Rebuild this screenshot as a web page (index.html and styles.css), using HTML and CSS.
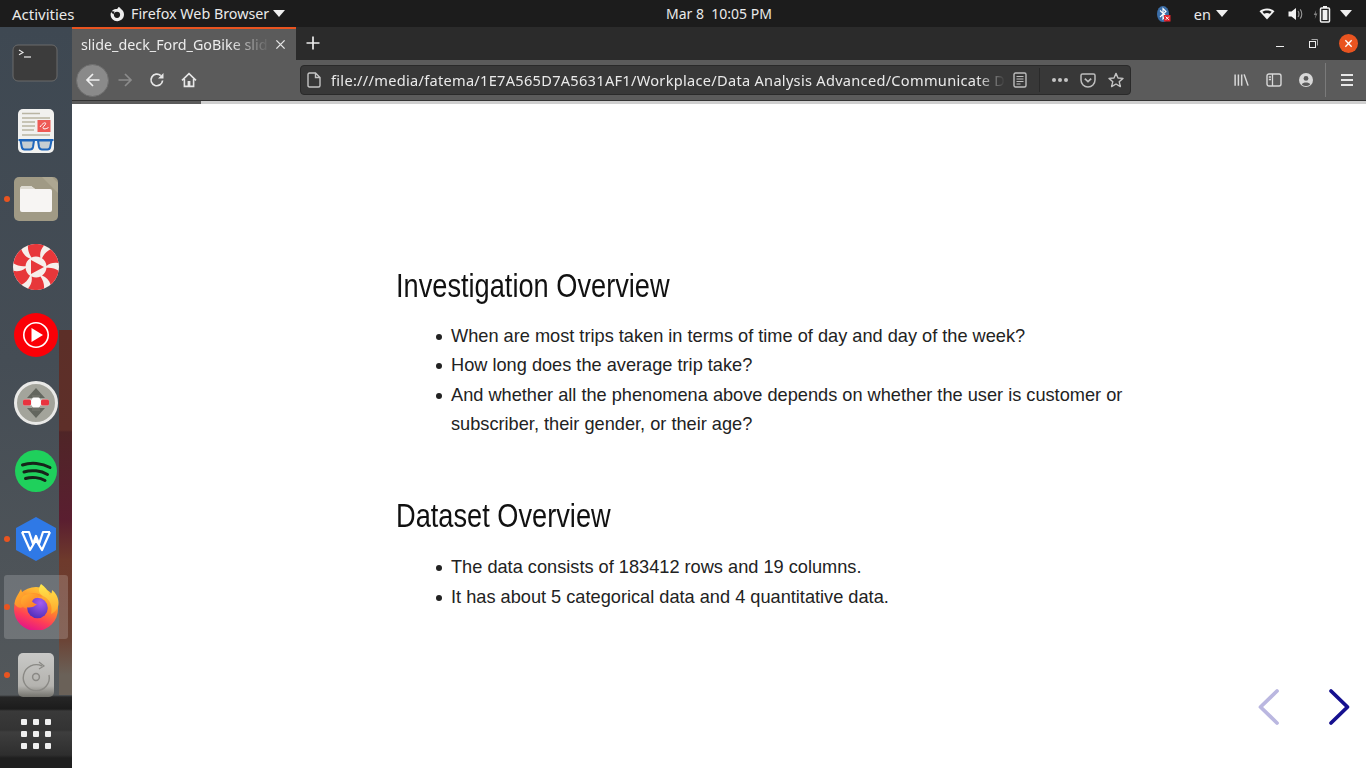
FILE: index.html
```html
<!DOCTYPE html>
<html lang="en">
<head>
<meta charset="utf-8">
<title>slide_deck_Ford_GoBike</title>
<link rel="stylesheet" href="styles.css">
</head>
<body>
<header class="topbar">
  <div class="tb-left">
    <span class="activities">Activities</span>
    <span class="appmenu">
      <svg class="fx-mono" viewBox="0 0 16 16"><path fill="#eee" d="M9.5 1 C9 2 8.6 2.6 8 3 C4.6 3 1.6 5 1.6 8.8 C1.6 12.4 4.6 15.2 8.2 15.2 C12 15.2 15 12.4 15 8.6 C15 6.2 13.8 4.2 12 3.1 C11.6 2.2 10.6 1.4 9.5 1 Z"/><circle cx="8" cy="8.8" r="3.1" fill="#1c1c1c"/><path fill="#1c1c1c" d="M1 5 L5.5 5.4 L4.5 8.4 Z"/></svg>
      <span>Firefox Web Browser</span><i class="caret"></i>
    </span>
  </div>
  <div class="clock">Mar 8&nbsp;&nbsp;10:05 PM</div>
  <div class="tb-right">
    <svg class="bt" viewBox="0 0 14 18"><ellipse cx="6" cy="9" rx="6" ry="8" fill="#3b6ea8"/><path d="M3 5.5 L9 11 L6 14 V3.5 L9 6.5 L3 12" fill="none" stroke="#fff" stroke-width="1.1"/><rect x="7" y="10" width="6.5" height="6.5" fill="#e0242c"/><path d="M8.7 11.7 L11.8 14.8 M11.8 11.7 L8.7 14.8" stroke="#fff" stroke-width="1"/></svg>
    <span class="lang">en</span><i class="caret lang-caret"></i>
    <svg class="wifi" viewBox="0 0 16 12"><path d="M0.5 3.2 C4.5 -0.3 11.5 -0.3 15.5 3.2 L8 11.5 Z" fill="#f2f2f2"/><path d="M3.4 3.8 C6 2 10 2 12.6 3.8 L10.9 5.8 C9 4.6 7 4.6 5.1 5.8 Z" fill="#1c1c1c"/></svg>
    <svg class="vol" viewBox="0 0 16 14"><path d="M0.5 4.5 H3.5 L8 1 V13 L3.5 9.5 H0.5 Z" fill="#f2f2f2"/><path d="M10 4 C11.3 5.5 11.3 8.5 10 10 M12.2 2.4 C14.3 5 14.3 9 12.2 11.6" fill="none" stroke="#999" stroke-width="1.1"/></svg>
    <svg class="batt" viewBox="0 0 18 18"><path d="M3.2 5 L0.8 10 H2.6 L1.8 14 L4.4 8.4 H2.6 Z" fill="#888"/><rect x="7.5" y="3" width="9" height="14" rx="1" fill="none" stroke="#f2f2f2" stroke-width="1.5"/><rect x="10" y="1" width="4" height="2" fill="#f2f2f2"/><rect x="9.6" y="5" width="4.8" height="10" fill="#f2f2f2"/></svg>
    <i class="caret"></i>
  </div>
</header>

<div class="desktop">
  <nav class="dock">
    <div class="dock-item">
      <svg class="ic" viewBox="0 0 48 40"><rect x="1" y="1" width="44" height="36" rx="5" fill="#3c3c3c" stroke="#6a6a6a" stroke-width="1"/><path d="M7 6 L11 8.4 L7 10.8" fill="none" stroke="#eee" stroke-width="1.1"/><path d="M12 13 H19" stroke="#eee" stroke-width="1.2"/></svg>
    </div>
    <div class="dock-item">
      <svg class="ic" viewBox="0 0 38 46"><rect x="1" y="1" width="36" height="44" rx="5" fill="#f1f1ef"/><path d="M5 5.5 H23 M5 10 H33 M5 14 H18 M5 18 H18 M5 22 H17 M5 27 H33" stroke="#b9b5a3" stroke-width="1.7"/><rect x="20.5" y="12" width="13" height="12" fill="#ee5a55"/><path d="M23 19 C27 13 31 14 27 18 C24 21 28 22 31.5 19.5" fill="none" stroke="#fff" stroke-width="1"/><path d="M1.5 32 H36.5" stroke="#1f66bb" stroke-width="2"/><path d="M3.5 32.5 H17 L16 39 Q15.5 41.5 13 41.5 H7.5 Q5.3 41.5 4.8 39 Z M21 32.5 H34.5 L33.2 39 Q32.7 41.5 30.5 41.5 H25 Q22.8 41.5 22 39 Z" fill="#c6ced2" stroke="#1f66bb" stroke-width="2" stroke-linejoin="round"/></svg>
    </div>
    <div class="dock-item">
      <span class="dot"></span>
      <svg class="ic" viewBox="0 0 44 44"><rect x="0" y="0" width="44" height="44" rx="5" fill="#a09a85"/><path d="M28 0 L44 16 V6 L38 0 Z" fill="#ada792"/><path d="M6 13 Q6 9 9 9 H17 L21 12 H36 Q38 12 38 14 V33 Q38 35 36 35 H8 Q6 35 6 33 Z" fill="#f7f5f3"/><path d="M6 13 Q6 9 9 9 H17 L21 12 H6 Z" fill="#dedbd2"/></svg>
    </div>
    <div class="dock-item">
      <svg class="ic" viewBox="0 0 46 46"><defs><path id="blade" d="M15 1.5 A23 23 0 0 1 31 1.4 C28 5 26.5 9 27.4 13.5 A10.5 10.5 0 0 0 18.5 13.5 C16 10 14.5 5.5 15 1.5 Z" fill="#e7373a"/></defs><circle cx="23" cy="23" r="23" fill="#f6efeb"/><use href="#blade"/><use href="#blade" transform="rotate(60 23 23)"/><use href="#blade" transform="rotate(120 23 23)"/><use href="#blade" transform="rotate(180 23 23)"/><use href="#blade" transform="rotate(240 23 23)"/><use href="#blade" transform="rotate(300 23 23)"/><path d="M18 16 L31 23 L18 30 Z" fill="#e7373a"/></svg>
    </div>
    <div class="dock-item">
      <svg class="ic" viewBox="0 0 44 44"><circle cx="22" cy="22" r="22" fill="#fb0007"/><circle cx="22" cy="22" r="12.2" fill="none" stroke="#fff" stroke-width="1.6"/><path d="M17.5 15 L29 22 L17.5 29 Z" fill="#fff"/></svg>
    </div>
    <div class="dock-item">
      <svg class="ic" viewBox="0 0 44 44"><circle cx="22" cy="22" r="20.5" fill="#a3a49b" stroke="#e9e9e7" stroke-width="3"/><path d="M22 7 L31 17 H13 Z M22 37 L13 27 H31 Z" fill="#63665e"/><rect x="18" y="14" width="8" height="16" fill="#6e7068"/><rect x="9" y="18.5" width="26" height="6" rx="1.5" fill="#f4f4f4"/><rect x="9" y="18.5" width="8" height="6" rx="1.5" fill="#e8343f"/><rect x="27" y="18.5" width="8" height="6" rx="1.5" fill="#e8343f"/><rect x="18" y="16.5" width="8" height="10" rx="1.5" fill="#fff"/></svg>
    </div>
    <div class="dock-item">
      <svg class="ic spot" viewBox="0 0 42 42"><circle cx="21" cy="21" r="21" fill="#1fd05c"/><path d="M7.5 15 C16 12 27 13 35 17.5 M9 22 C16.5 19.5 26 20.5 32.5 24.5 M10.5 28.5 C17 26.5 25 27.5 30 30.5" fill="none" stroke="#16241a" stroke-width="3" stroke-linecap="round"/></svg>
    </div>
    <div class="dock-item">
      <span class="dot"></span>
      <svg class="ic wps" viewBox="0 0 40 44"><path d="M20 0 L40 11 V33 L20 44 L0 33 V11 Z" fill="#2f79e6"/><path d="M6 15 H13 L17 27 L20 19 L23 27 L27 15 H34 M6 15 L14 33 L20 23 L26 33 L34 15" fill="none" stroke="#fff" stroke-width="2.2" stroke-linejoin="round"/></svg>
    </div>
    <div class="dock-item active">
      <span class="dot"></span>
      <svg class="ic" viewBox="0 0 46 46"><defs><linearGradient id="fxa" x1="0.75" y1="0" x2="0.35" y2="1"><stop offset="0" stop-color="#ffd23a"/><stop offset=".42" stop-color="#ff8a2a"/><stop offset=".72" stop-color="#ff3f56"/><stop offset="1" stop-color="#e2148a"/></linearGradient><linearGradient id="fxy" x1="0.5" y1="0" x2="0.5" y2="1"><stop offset="0" stop-color="#ffe94d"/><stop offset="1" stop-color="#ffa52c"/></linearGradient><linearGradient id="fxo" x1="0" y1="0" x2="1" y2="1"><stop offset="0" stop-color="#ffb62e"/><stop offset="1" stop-color="#ff6f2a"/></linearGradient><radialGradient id="fxb" cx=".65" cy=".25" r=".85"><stop offset="0" stop-color="#a45cf0"/><stop offset="1" stop-color="#4a2bb5"/></radialGradient></defs><circle cx="23" cy="25" r="22" fill="url(#fxa)"/><path fill="url(#fxy)" d="M28 0 C25 5 25 9 30 12 C37 15 40 22 38 30 C42 28 45.5 25 45.5 19 C45.5 13 42 8 39 6 C39 9 38 10.5 36.5 11 C35 6 32 3 28 0 Z"/><path fill="url(#fxo)" d="M1.5 20 C2 14 5 11 8 5 C9 9 11 11 13 11.5 C18 8 24 8 29.5 12 C24 11 19 13 18 17 C20 19.5 22 20 24 20 C20 25 14 26 10 23 C7 25 4 23 1.5 20 Z"/><circle cx="24.5" cy="24" r="10.3" fill="url(#fxb)"/><path fill="url(#fxo)" d="M8 20 C7 12 13 10 18 10 C22 9.5 27 10.5 30 13 C25 12 20.5 13.5 19 17.5 C21 19.5 22.5 20 24 20 C20 24.5 12 25 8 20 Z"/></svg>
    </div>
    <div class="dock-item">
      <span class="dot"></span>
      <svg class="ic" viewBox="0 0 36 44"><defs><linearGradient id="cd" x1="0" y1="0" x2="0" y2="1"><stop offset="0" stop-color="#c9c9c7"/><stop offset=".75" stop-color="#b4b3af"/><stop offset="1" stop-color="#73726c"/></linearGradient></defs><rect width="36" height="44" rx="5" fill="url(#cd)"/><path d="M24 13 A13 13 0 1 0 31 22" fill="none" stroke="#8a8985" stroke-width="1.4"/><path d="M21 9 L26 13 L21 16" fill="none" stroke="#8a8985" stroke-width="1.2"/><circle cx="18" cy="24" r="3.4" fill="none" stroke="#8a8985" stroke-width="1.5"/></svg>
    </div>
    <div class="dock-item">
      <div class="grid9"><i></i><i></i><i></i><i></i><i></i><i></i><i></i><i></i><i></i></div>
    </div>
  </nav>

  <section class="browser">
    <div class="tabbar">
      <div class="tab">
        <span class="tab-title">slide_deck_Ford_GoBike slid</span>
        <svg class="tab-x" viewBox="0 0 12 12"><path d="M1.5 1.5 L10.5 10.5 M10.5 1.5 L1.5 10.5" stroke="#e4e4e4" stroke-width="1.5"/></svg>
      </div>
      <svg class="newtab" viewBox="0 0 14 14"><path d="M7 0.5 V13.5 M0.5 7 H13.5" stroke="#ececec" stroke-width="1.7"/></svg>
      <div class="winctl">
        <span class="min"></span>
        <svg class="max" viewBox="0 0 9 9"><rect x="0.5" y="2.5" width="6" height="6" fill="none" stroke="#eee"/><path d="M2.5 0.5 H8.5 V6.5" fill="none" stroke="#aaa"/></svg>
        <span class="close"><svg viewBox="0 0 10 10"><path d="M1.5 1.5 L8.5 8.5 M8.5 1.5 L1.5 8.5" stroke="#fff" stroke-width="1.5"/></svg></span>
      </div>
    </div>
    <div class="navbar">
      <span class="back"><svg viewBox="0 0 16 16"><path d="M14.5 8 H2 M8 2 L2 8 L8 14" fill="none" stroke="#f0f0f0" stroke-width="1.7"/></svg></span>
      <svg class="nav-ic dim" viewBox="0 0 16 16"><path d="M1.5 8 H14 M8 2 L14 8 L8 14" fill="none" stroke="#8c8c8c" stroke-width="1.7"/></svg>
      <svg class="nav-ic" viewBox="0 0 16 16"><path d="M13.6 8.5 A5.8 5.8 0 1 1 11.8 3.7" fill="none" stroke="#e6e6e6" stroke-width="1.7"/><path d="M14.5 1 V6.5 H9 Z" fill="#e6e6e6"/></svg>
      <svg class="nav-ic" viewBox="0 0 16 16"><path d="M1 8.4 L8 1.6 L15 8.4 M3.4 7 V14.4 H12.6 V7" fill="none" stroke="#e6e6e6" stroke-width="1.6"/><rect x="6.6" y="9" width="2.8" height="5.4" fill="#e6e6e6"/></svg>
      <div class="urlbar">
        <svg class="page" viewBox="0 0 14 16"><path d="M1 2.5 Q1 1 2.5 1 H8.5 L13 5.5 V13.5 Q13 15 11.5 15 H2.5 Q1 15 1 13.5 Z M8.5 1 V5.5 H13" fill="none" stroke="#c4c4c4" stroke-width="1.4"/></svg>
        <span class="url">file:///media/fatema/1E7A565D7A5631AF1/Workplace/Data Analysis Advanced/Communicate D</span>
        <svg class="u-ic reader" viewBox="0 0 14 16"><rect x="1" y="1" width="12" height="14" rx="1.5" fill="none" stroke="#bdbdbd" stroke-width="1.4"/><path d="M3.5 4.5 H10.5 M3.5 7 H10.5 M3.5 9.5 H10.5 M3.5 12 H7.5" stroke="#bdbdbd" stroke-width="1.2"/></svg>
        <span class="u-sep"></span>
        <span class="more"><i></i><i></i><i></i></span>
        <svg class="u-ic pocket" viewBox="0 0 16 15"><path d="M1 2.5 Q1 1 2.5 1 H13.5 Q15 1 15 2.5 V7 A7 7 0 0 1 1 7 Z" fill="none" stroke="#bdbdbd" stroke-width="1.5"/><path d="M4.8 5.6 L8 8.6 L11.2 5.6" fill="none" stroke="#bdbdbd" stroke-width="1.7"/></svg>
        <svg class="u-ic star" viewBox="0 0 16 16"><path d="M8 1.4 L10 6 L15 6.4 L11.2 9.7 L12.4 14.6 L8 12 L3.6 14.6 L4.8 9.7 L1 6.4 L6 6 Z" fill="none" stroke="#c4c4c4" stroke-width="1.4" stroke-linejoin="round"/></svg>
      </div>
      <div class="tools">
        <svg class="tool lib" viewBox="0 0 16 14"><path d="M1.2 1 V13 M4.7 1 V13 M8.2 1 V13 M10.8 1 L15 13" stroke="#d8d8d8" stroke-width="1.6" fill="none"/></svg>
        <svg class="tool side" viewBox="0 0 16 14"><rect x="1" y="1" width="14" height="12" rx="2" fill="none" stroke="#d8d8d8" stroke-width="1.4"/><path d="M6.5 1 V13 M2.8 4 H5 M2.8 6.5 H5" stroke="#d8d8d8" stroke-width="1.3"/></svg>
        <svg class="tool acct" viewBox="0 0 14 14"><circle cx="7" cy="7" r="7" fill="#d8d8d8"/><circle cx="7" cy="5.4" r="2.4" fill="#5b5b5b"/><path d="M2.8 11.4 C4 8.8 10 8.8 11.2 11.4 A7 7 0 0 1 2.8 11.4 Z" fill="#5b5b5b"/></svg>
        <span class="tool-sep"></span>
        <span class="burger"><i></i><i></i><i></i></span>
      </div>
    </div>
    <div class="progress"><div class="progress-fill"></div></div>

    <main class="slide">
      <h2>Investigation Overview</h2>
      <ul>
        <li>When are most trips taken in terms of time of day and day of the week?</li>
        <li>How long does the average trip take?</li>
        <li>And whether all the phenomena above depends on whether the user is customer or subscriber, their gender, or their age?</li>
      </ul>
      <h2 class="second">Dataset Overview</h2>
      <ul class="second-list">
        <li>The data consists of 183412 rows and 19 columns.</li>
        <li>It has about 5 categorical data and 4 quantitative data.</li>
      </ul>
      <div class="controls">
        <svg class="prev" viewBox="0 0 24 38"><path d="M20 3 L3.5 19 L20 35" fill="none" stroke="#bab7e0" stroke-width="3.8" stroke-linecap="round" stroke-linejoin="round"/></svg>
        <svg class="next" viewBox="0 0 24 38"><path d="M4 3 L20.5 19 L4 35" fill="none" stroke="#15108f" stroke-width="3.8" stroke-linecap="round" stroke-linejoin="round"/></svg>
      </div>
    </main>
  </section>
</div>
</body>
</html>
```

FILE: styles.css
```css
* { box-sizing: border-box; }
html, body { margin: 0; height: 100%; overflow: hidden; }
body { width: 1366px; height: 768px; display: flex; flex-direction: column; font-family: "Noto Sans", "Open Sans", sans-serif; background: #fff; }

.topbar { height: 27px; flex: none; background: #1c1c1c; color: #eaeaea; display: flex; align-items: center; position: relative; font-size: 14.3px; }
.tb-left { display: flex; align-items: center; padding-left: 12px; }
.activities { width: 97px; font-size: 15px; }
.appmenu { display: flex; align-items: center; gap: 6px; }
.appmenu .caret { margin-left: -2px; }
.fx-mono { width: 16px; height: 16px; }
.caret { display: block; width: 0; height: 0; border: 6px solid transparent; border-top: 7px solid #f0f0f0; border-bottom: 0; }
.clock { position: absolute; left: 0; right: 0; text-align: center; top: 4px; font-size: 14px; padding-left: 72px; }
.tb-right { margin-left: auto; display: flex; align-items: center; padding-right: 14px; }
.bt { width: 14px; height: 18px; margin-right: 23px; }
.lang { font-size: 14.5px; margin-right: 5px; }
.lang-caret { margin-right: 31px; }
.wifi { width: 16px; height: 12px; margin-right: 13px; }
.vol { width: 16px; height: 14px; margin-right: 9px; }
.batt { width: 18px; height: 18px; margin-right: 9px; }

.desktop { flex: 1; display: flex; min-height: 0; }
.dock { width: 72px; flex: none; display: flex; flex-direction: column; padding-top: 2px; background:
  linear-gradient(180deg, transparent 0, transparent 668px, #262626 670px, #1c1c1c 682px, #3a3a3a 684px, #333 703px, #3e3e3e 705px, #2e2e2e 728px, #1f1f1f 731px),
  linear-gradient(180deg, #5c2f28 0, #5e2f29 100px, #4f2527 102px, #5a1e30 190px, #6e3a2c 230px, #6b4436 310px, #6a6158 345px) 59px 303px / 13px 365px no-repeat,
  linear-gradient(180deg, #3e4852 0, #454d55 45%, #565a5c 100%); }
.dock-item { height: 68px; flex: none; display: flex; align-items: center; justify-content: center; position: relative; }
.dock-item.active::before { content: ""; position: absolute; left: 4px; top: 2px; width: 64px; height: 64px; background: rgba(255,255,255,.18); border-radius: 3px; }
.dot { position: absolute; left: 4px; top: 31px; width: 6px; height: 6px; border-radius: 50%; background: #e95420; }
.ic { position: relative; width: 44px; height: 44px; }
.dock-item:nth-child(1) .ic { width: 48px; height: 40px; margin: 2px 0 0 -1px; }
.dock-item:nth-child(2) .ic { width: 38px; height: 46px; }
.dock-item:nth-child(4) .ic { width: 46px; height: 46px; }
.dock-item:nth-child(9) .ic { width: 46px; height: 46px; }
.dock-item:nth-child(10) .ic { width: 36px; height: 44px; }
.spot { width: 42px; height: 42px; }
.wps { width: 40px; height: 44px; }
.grid9 { display: grid; grid-template-columns: repeat(3, 6px); gap: 6px; margin-bottom: 18px; }
.grid9 i { display: block; width: 6px; height: 6px; background: #efefef; border-radius: 1px; }

.browser { flex: 1; min-width: 0; display: flex; flex-direction: column; }
.tabbar { height: 33px; flex: none; background: #2b2b2b; display: flex; align-items: center; }
.tab { width: 224px; height: 33px; background: #5b5b5b; border-top: 2px solid #e95420; display: flex; align-items: center; padding: 0 10px 0 9px; gap: 5px; }
.tab-title { flex: 1; min-width: 0; white-space: nowrap; color: #ececec; font-size: 14.3px; -webkit-mask-image: linear-gradient(90deg, #000 78%, transparent 100%); mask-image: linear-gradient(90deg, #000 78%, transparent 100%); }
.tab-x { width: 11px; height: 11px; flex: none; }
.newtab { width: 14px; height: 14px; margin: -2px 0 0 10px; }
.winctl { margin-left: auto; display: flex; align-items: center; padding-right: 8px; }
.min { width: 8px; height: 1px; background: #eee; margin-right: 25px; margin-top: 6px; }
.max { width: 9px; height: 9px; margin-right: 21px; }
.close { width: 19px; height: 19px; border-radius: 50%; background: #e95420; display: flex; align-items: center; justify-content: center; }
.close svg { width: 9px; height: 9px; }

.navbar { height: 40px; flex: none; background: #5b5b5b; display: flex; align-items: center; padding-left: 4px; }
.back { width: 33px; height: 33px; border-radius: 50%; background: #8a8a8a; border: 1px solid #6f6f6f; display: flex; align-items: center; justify-content: center; }
.back svg { width: 16px; height: 16px; }
.nav-ic { width: 16px; height: 16px; margin-left: 16px; }
.nav-ic.dim { margin-left: 8px; }
.urlbar { width: 831px; height: 30px; margin-left: 103px; background: #383838; border: 1px solid #2a2a2a; border-radius: 4px; display: flex; align-items: center; padding-left: 6px; padding-right: 6px; }
.page { width: 14px; height: 16px; flex: none; }
.url { flex: 1; min-width: 0; white-space: nowrap; margin-left: 10px; color: #eaeaea; font-size: 14.6px; letter-spacing: .28px; -webkit-mask-image: linear-gradient(90deg, #000 96%, transparent 100%); mask-image: linear-gradient(90deg, #000 96%, transparent 100%); }
.u-ic { flex: none; }
.reader { width: 14px; height: 16px; margin-left: 8px; }
.u-sep { width: 1px; height: 24px; background: #2a2a2a; margin: 0 12px; }
.more { display: flex; gap: 2px; margin-right: 12px; }
.more i { width: 4px; height: 4px; border-radius: 50%; background: #c4c4c4; display: block; }
.pocket { width: 16px; height: 15px; margin-right: 12px; }
.star { width: 16px; height: 16px; }
.tools { flex: 1; display: flex; align-items: center; padding-left: 103px; }
.tool { display: block; flex: none; }
.lib { width: 15px; height: 14px; margin-right: 17px; }
.side { width: 16px; height: 14px; margin-right: 17px; }
.acct { width: 14px; height: 14px; margin-right: 12px; }
.tool-sep { width: 1px; height: 34px; background: #7a7a7a; margin-right: 15px; }
.burger { display: flex; flex-direction: column; gap: 3px; width: 12px; }
.burger i { display: block; height: 2px; background: #e6e6e6; }

.progress { height: 4px; flex: none; background: #cfcfcf; border-top: 1px solid #333; }
.progress-fill { width: 129px; height: 3px; background: #5b5b5b; }

.slide { flex: 1; min-height: 0; position: relative; background: #fff; padding: 159px 0 0 324px; width: 100%; color: #222; }
.slide h2 { margin: 0; font-family: "Liberation Sans", Arial, sans-serif; font-weight: 400; font-size: 34px; line-height: 44px; color: #111; transform: scaleX(.8); transform-origin: left center; }
.slide h2.second { margin-top: 53.4px; }
.slide ul { margin: 14.6px 0 0; padding: 0 0 0 55px; width: 740px; font-family: "Liberation Sans", Arial, sans-serif; font-size: 18.2px; line-height: 29.6px; list-style: none; }
.slide ul.second-list { margin-top: 16px; }
.slide li { position: relative; }
.slide li::before { content: ""; position: absolute; left: -15px; top: 12px; width: 6px; height: 6px; border-radius: 50%; background: #222; }
.controls { position: absolute; right: 15px; bottom: 42px; display: flex; gap: 46px; }
.controls svg { width: 24px; height: 38px; display: block; }
```
